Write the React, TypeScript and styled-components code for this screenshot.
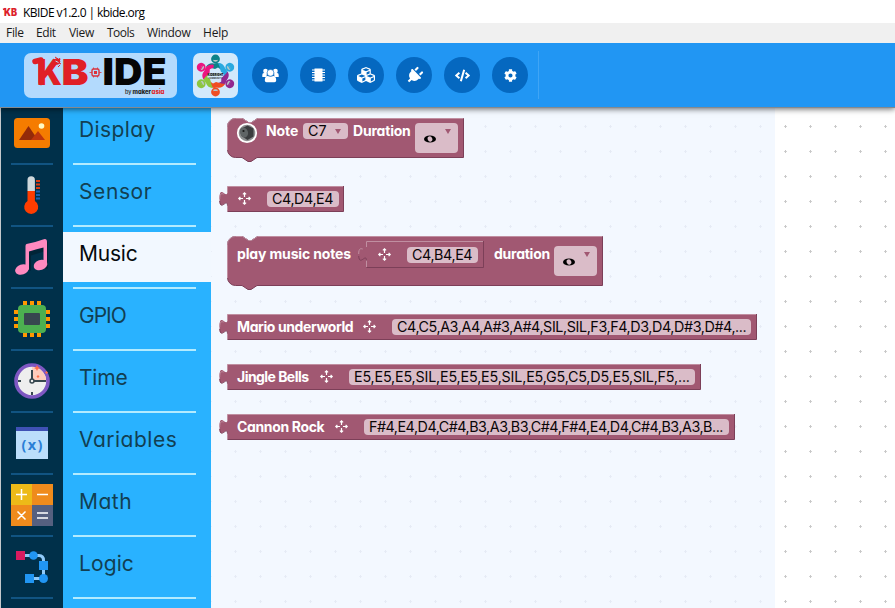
import React from "react";
import styled, { createGlobalStyle } from "styled-components";
import { FaCode, FaCog, FaCubes, FaPlug } from "react-icons/fa";

const GlobalStyle = createGlobalStyle`
  * { box-sizing: border-box; }
  body { margin: 0; background: #fff; font-family: Inter, "Noto Sans", sans-serif; font-feature-settings: "cv11"; overflow: hidden; }
  svg { display: block; overflow: visible; flex: none; }
`;

const Window = styled.div`
  width: 895px;
  height: 608px;
  display: flex;
  flex-direction: column;
  overflow: hidden;
`;

const TitleBar = styled.div`
  height: 23px;
  flex: none;
  display: flex;
  align-items: center;
  gap: 5px;
  padding-left: 3px;
  background: #fff;
  color: #000;
  font: 12px/23px "Open Sans", sans-serif;
`;

const TitleText = styled.span`
  padding-top: 1px;
  letter-spacing: -0.57px;
  white-space: nowrap;
`;

const MenuBar = styled.div`
  position: relative;
  z-index: 2;
  height: 20px;
  flex: none;
  display: flex;
  background: #f0f0f0;
  padding-left: 6px;
  font: 12px/20px "Open Sans", sans-serif;
  color: #1a1a1a;
`;

const MenuItem = styled.span<{ $w: number; $ls: number }>`
  width: ${(p) => p.$w}px;
  letter-spacing: ${(p) => p.$ls}px;
`;

const Header = styled.header`
  height: 65px;
  flex: none;
  display: flex;
  align-items: flex-start;
  padding: 10px 0 0 24px;
  background: #2196f3;
  border-bottom: 1px solid #84898e;
  box-shadow: 0 1px 6px rgba(0, 0, 0, 0.6);
  z-index: 1;
`;

const LogoBox = styled.div<{ $w: number; $bg: string }>`
  width: ${(p) => p.$w}px;
  height: 45px;
  margin-right: 16px;
  border-radius: 7px;
  background: ${(p) => p.$bg};
`;

const Tools = styled.nav`
  display: flex;
  gap: 12px;
  height: 48px;
  margin: -2px 0 0 -2px;
  padding: 6px 10px 0 0;
  border-right: 1px solid #3fa5f6;
`;

const ToolButton = styled.button`
  width: 36px;
  height: 36px;
  border: 0;
  padding: 0;
  border-radius: 50%;
  background: #0568c0;
  color: #fff;
  display: flex;
  align-items: center;
  justify-content: center;
`;

const Main = styled.main`
  flex: 1;
  display: flex;
  min-height: 0;
  border-left: 1px solid #c4c8cc;
`;

const IconColumn = styled.div`
  width: 62px;
  flex: none;
  background: #00304a;
`;

const LabelColumn = styled.div`
  width: 148px;
  flex: none;
  background: #29b2ff;
`;

const IconCell = styled.div`
  height: 50px;
  display: flex;
  align-items: center;
  justify-content: center;
`;

const LabelCell = styled.div<{ $active: boolean; $ls: number }>`
  height: 50px;
  padding-left: 16px;
  font-size: 21px;
  line-height: 44px;
  letter-spacing: ${(p) => p.$ls}px;
  color: ${(p) => (p.$active ? "#050a0d" : "#123f52")};
  background: ${(p) => (p.$active ? "#f2f8ff" : "transparent")};
`;

const Divider = styled.div<{ $dark?: boolean }>`
  height: 2px;
  margin: ${(p) => (p.$dark ? "5px 10px" : "5px 15px 5px 10px")};
  background: ${(p) => (p.$dark ? "#115482" : "#b3ebff")};
`;

const dots = (c: string, soft: string, x: number) => `
  background:
    conic-gradient(from 0deg at 1px 3px, transparent 270deg, ${c} 0) ${x}px 17px / 25px 25px,
    conic-gradient(from 0deg at 3px 1px, transparent 270deg, ${soft} 0) ${x - 1}px 18px / 25px 25px;
`;

const Flyout = styled.section`
  width: 564px;
  flex: none;
  padding: 10px 0 0 16px;
  ${dots("#e6ebf5", "#e9eef8", 24)}
  background-color: #f3f8ff;
`;

const Workspace = styled.section`
  flex: 1;
  ${dots("#c8c8c8", "#d2d2d2", 10)}
  background-color: #fff;
`;

const BlockBox = styled.div<{ $w: number; $h: number; $mt: number }>`
  position: relative;
  display: flex;
  align-items: flex-start;
  width: ${(p) => p.$w}px;
  height: ${(p) => p.$h}px;
  margin-top: ${(p) => p.$mt}px;
`;

const Shape = styled.svg`
  position: absolute;
  left: 0;
  top: 0;
`;

const Label = styled.span<{ $ml: number; $w: number; $mt?: number; $ls: number }>`
  position: relative;
  flex: none;
  margin: ${(p) => p.$mt ?? 4}px 0 0 ${(p) => p.$ml}px;
  width: ${(p) => p.$w}px;
  line-height: 17px;
  font-size: 14px;
  font-weight: 700;
  letter-spacing: ${(p) => p.$ls}px;
  color: #fff;
  white-space: nowrap;
`;

const Field = styled.span<{ $ml: number; $w: number; $ls?: number; $mt?: number; $h?: number }>`
  position: relative;
  flex: none;
  display: flex;
  align-items: center;
  margin: ${(p) => p.$mt ?? 5}px 0 0 ${(p) => p.$ml}px;
  padding-left: 5px;
  width: ${(p) => p.$w}px;
  height: ${(p) => p.$h ?? 16}px;
  border-radius: 4px;
  background: #dabcc8;
  color: #0a0507;
  font-size: 14.3px;
  line-height: 16px;
  letter-spacing: ${(p) => p.$ls ?? 0}px;
  white-space: nowrap;
`;

const IconSlot = styled.span<{ $ml: number; $mt: number }>`
  position: relative;
  flex: none;
  margin: ${(p) => p.$mt}px 0 0 ${(p) => p.$ml}px;
`;

const FILL = "#a15872";
const LIGHT = "#c08fa1";
const DARK = "#7c3f58";

function StatementShape({ w, h }: { w: number; h: number }) {
  return (
    <Shape width={w} height={h + 5}>
      <path d={`M.5 8.5A8 8 0 0 1 8.5.5H15.5l6 4h3l6-4H${w - 0.5}V${h - 0.5}H30l-6 4h-3l-6-4H8.5a8 8 0 0 1-8-8z`} fill={FILL} stroke={DARK} />
      <path d={`M.5 ${h - 8}V8.5A8 8 0 0 1 8.5.5H15.5l6 4h3l6-4H${w - 1}`} fill="none" stroke={LIGHT} />
    </Shape>
  );
}

function ValueShape({ w, h }: { w: number; h: number }) {
  return (
    <Shape width={w} height={h}>
      <path d={`M.5.5H${w - 0.5}V${h - 0.5}H.5V20c0-10-8 8-8-7.5s8 2.5 8-7.5z`} fill={FILL} />
      <path d={`M${w - 0.5} 0V${h - 0.5}H.5M.5 20c0-9-7 6-7.800-5`} fill="none" stroke={DARK} />
      <path d={`M-7.300 13c0-6 2-5.500 4-5M.5 6V.5H${w - 1}M.5 19.500V${h - 1}`} fill="none" stroke={LIGHT} />
    </Shape>
  );
}

const Move = () => (
  <svg width="13" height="13" viewBox="0 0 13 13" fill="none" stroke="#fff" strokeWidth="1.2">
    <path d="M6.5 1v4M6.5 8v4M1 6.500h4M8 6.500h4" />
    <path d="M4.900 2.400 6.500.8l1.600 1.600M4.900 10.600l1.600 1.600 1.600-1.600M2.400 4.900.8 6.500l1.600 1.600M10.600 4.900l1.600 1.600-1.600 1.600" />
  </svg>
);

const Arrow = () => (
  <svg width="6" height="5" viewBox="0 0 6 5"><path d="M0 0h6L3 5z" fill="#a15872" /></svg>
);

const WholeNote = () => (
  <svg width="12" height="8" viewBox="0 0 12 8">
    <ellipse cx="6" cy="4" rx="6" ry="3.600" fill="#000" />
    <ellipse cx="6" cy="4" rx="2.300" ry="2.700" fill="#dabcc8" transform="rotate(-25 6 4)" />
  </svg>
);

const Buzzer = () => (
  <svg width="20" height="20" viewBox="0 0 20 20">
    <circle cx="10" cy="10" r="9.200" fill="#8d8f90" stroke="#fff" strokeWidth="1.800" />
    <path d="M3.500 6l7-3.500 6 3v8l-6 3.500-6-4z" fill="#3a3c3e" />
    <ellipse cx="7" cy="9.500" rx="4" ry="5" fill="#5f6465" transform="rotate(-20 7 9.500)" />
    <circle cx="6.500" cy="8" r="1.100" fill="#171717" />
  </svg>
);

const Dropdown = styled(Field)`
  align-items: flex-start;
  padding: 6px 7px 0 9px;
  justify-content: space-between;
`;
const NoteGlyph = styled.span`
  margin-top: 6px;
`;

function NoteDropdown({ ml, mt }: { ml: number; mt: number }) {
  return (
    <Dropdown $ml={ml} $w={43} $h={30} $mt={mt}>
      <NoteGlyph><WholeNote /></NoteGlyph>
      <Arrow />
    </Dropdown>
  );
}

interface Melody { name: string; nw: number; nls: number; notes: string; fw: number; fls: number; w: number; mt: number }
const melodies: Melody[] = [
  { name: "Mario underworld", nw: 116, nls: -0.4, notes: "C4,C5,A3,A4,A#3,A#4,SIL,SIL,F3,F4,D3,D4,D#3,D#4,...", fw: 359, fls: -0.4, w: 530, mt: 28 },
  { name: "Jingle Bells", nw: 73, nls: -0.55, notes: "E5,E5,E5,SIL,E5,E5,E5,SIL,E5,G5,C5,D5,E5,SIL,F5,...", fw: 346, fls: -0.17, w: 474, mt: 24 },
  { name: "Cannon Rock", nw: 88, nls: -0.35, notes: "F#4,E4,D4,C#4,B3,A3,B3,C#4,F#4,E4,D4,C#4,B3,A3,B...", fw: 365, fls: -0.47, w: 508, mt: 24 },
];

const DisplayIcon = () => (
  <svg width="36" height="30" viewBox="0 0 36 30">
    <rect width="36" height="30" rx="3.500" fill="#f57c00" />
    <circle cx="27.500" cy="8" r="2.800" fill="#fff9c4" />
    <path d="M5 22 14.500 8 24 22z" fill="#942a09" />
    <path d="m17 22 7-9 7 9z" fill="#bf360c" />
  </svg>
);
const SensorIcon = () => (
  <svg width="36" height="40" viewBox="0 0 36 40">
    <path d="M13.500 16V5a3.700 3.700 0 0 1 7.400 0v11z" fill="#cfd8dc" />
    <path d="M13.500 16h7.400v10a7 7 0 1 1-7.400 0z" fill="#ff3d00" />
    <path d="M22 6h4M22 9.500h4M22 13h4" stroke="#dd3b12" strokeWidth="2" />
    <path d="M22 16.500h4M22 20h4M22 23.500h4" stroke="#1760b0" strokeWidth="2" />
  </svg>
);
const MusicIcon = () => (
  <svg width="34" height="37" viewBox="0 0 34 37">
    <g fill="#001c2c" opacity=".6" transform="translate(1 1.500)"><path d="M11 8 32 1v27h-4V11l-13 4v15h-4z" /></g>
    <g transform="translate(0 -1)" fill="#ff8ac0">
      <path d="M11.500 6Q20 4.500 28 1.500Q32 0 32 4v23h-3.500V9.500Q22 11 14 13.500v18h-3.500V8q0-1.500 1-2z" />
      <ellipse cx="7" cy="31.500" rx="7" ry="5" transform="rotate(-18 7 31.500)" />
      <ellipse cx="25.500" cy="27" rx="7" ry="5" transform="rotate(-18 25.500 27)" />
    </g>
  </svg>
);
const GpioIcon = () => (
  <svg width="36" height="36" viewBox="0 0 36 36">
    <path d="M11 0v36M18 0v36M25 0v36M0 11h36M0 18h36M0 25h36" stroke="#ff9800" strokeWidth="4" />
    <rect x="4" y="4" width="28" height="28" rx="4" fill="#4caf50" />
    <rect x="10" y="12" width="16" height="12" rx="1" fill="#37474f" />
  </svg>
);
const TimeIcon = () => (
  <svg width="36" height="36" viewBox="0 0 36 36">
    <circle cx="18" cy="18" r="16" fill="#eee" stroke="#7e57c2" strokeWidth="3.600" />
    <path d="M18 18V4A14 14 0 0 1 32 18z" fill="#ffccbc" />
    <path d="M18 7v11h11M4 18h3M18 29v3M29 18h3" stroke="#37474f" strokeWidth="2" fill="none" />
    <circle cx="18" cy="18" r="2" fill="#eee" stroke="#37474f" strokeWidth="1.500" />
    <path d="m23 2 1 2 2 1-2 1-1 2-1-2-2-1 2-1zM24 12l1.500 1.500L24 15l-1.500-1.500zM32.500 8l1.500 1.500-1.500 1.500L31 9.500z" fill="#ff6e4a" />
  </svg>
);
const VariablesIcon = () => (
  <svg width="32" height="32" viewBox="0 0 32 32">
    <rect width="32" height="32" fill="#bbdefb" />
    <rect width="32" height="4" fill="#3f51b5" />
    <text x="16" y="22.500" textAnchor="middle" fontFamily="Open Sans, sans-serif" fontWeight="700" fontSize="14.500" fill="#2a7fd6" textLength="21">(x)</text>
  </svg>
);
const MathIcon = () => (
  <svg width="42" height="42" viewBox="0 0 42 42">
    <path d="M0 0h21v21H0z" fill="#edba18" />
    <path d="M21 0h21v21H21zM0 21h21v21H0z" fill="#ef8b1c" />
    <path d="M21 21h21v21H21z" fill="#556080" />
    <path d="M10.500 5v11M5 10.500h11M26 10.500h11M6.500 27.500l8 8M14.500 27.500l-8 8M26 29h11M26 34h11" stroke="#fff" strokeWidth="1.500" />
  </svg>
);
const LogicIcon = () => (
  <svg width="32" height="32" viewBox="0 0 32 32">
    <path d="M5 4.500h18q4.500 0 4.500 5v18H13" stroke="#90caf9" strokeWidth="3" fill="none" />
    <rect width="9" height="9" fill="#d81b60" />
    <circle cx="17.500" cy="4.500" r="4.300" fill="#2196f3" />
    <rect x="23" y="10" width="9" height="9" fill="#2196f3" />
    <circle cx="27.500" cy="27.500" r="4.500" fill="#2196f3" />
    <rect x="9" y="23" width="9" height="9" fill="#2196f3" />
  </svg>
);

const categories = [
  { name: "Display", Icon: DisplayIcon, ls: 0.4 },
  { name: "Sensor", Icon: SensorIcon, ls: 0.6 },
  { name: "Music", Icon: MusicIcon, ls: -0.2 },
  { name: "GPIO", Icon: GpioIcon, ls: -1 },
  { name: "Time", Icon: TimeIcon, ls: -0.2 },
  { name: "Variables", Icon: VariablesIcon, ls: 0.5 },
  { name: "Math", Icon: MathIcon, ls: 0.5 },
  { name: "Logic", Icon: LogicIcon, ls: 0.1 },
];

const menu = [
  { name: "File", w: 30, ls: -0.3 },
  { name: "Edit", w: 33, ls: -0.4 },
  { name: "View", w: 38, ls: -0.3 },
  { name: "Tools", w: 40, ls: -0.5 },
  { name: "Window", w: 56, ls: -0.3 },
  { name: "Help", w: 40, ls: -0.2 },
];

const AppIcon = () => (
  <svg width="15" height="10" viewBox="0 0 15 10">
    <path d="M0 2.500 2.500 1.500" stroke="#dd1f2b" strokeWidth="1.800" />
    <text x="1" y="8.500" fontFamily="Inter, sans-serif" fontWeight="900" fontSize="10" fill="#dd1f2b" textLength="13" lengthAdjust="spacingAndGlyphs">KB</text>
  </svg>
);

const KbLogo = () => (
  <svg width="153" height="45" viewBox="0 0 153 45" fontFamily="Inter, sans-serif" fontWeight="900">
    <path d="M11 8.500 17 7v22.500" stroke="#e01f26" strokeWidth="5.500" fill="none" strokeLinecap="round" strokeLinejoin="round" />
    <text x="13" y="32" fontSize="36" fill="#e01f26" textLength="25" lengthAdjust="spacingAndGlyphs">K</text>
    <text x="37.500" y="32" fontSize="36" fill="#e01f26" textLength="27" lengthAdjust="spacingAndGlyphs">B</text>
    <g fill="#e01f26" stroke="#e01f26">
      <circle cx="33" cy="8.500" r="2.800" />
      <path d="m29 6 8 5M31 12l5-7M31 4l3 2M36 12l-2 2" fill="none" strokeWidth="1" />
    </g>
    <path d="m31.500 8 3 1.500" stroke="#b8dbfc" strokeWidth="1" />
    <g stroke="#e01f26" fill="none" opacity=".9">
      <rect x="68" y="16" width="7" height="7" rx="1.500" strokeWidth="1.400" />
      <rect x="70.500" y="18.500" width="2" height="2" fill="#e01f26" />
      <path d="M65.500 19.500h2.500M75 19.500h2.500M69.500 14.500v1.500M73.500 14.500v1.500M69.500 23v1.500M73.500 23v1.500" strokeWidth=".8" />
    </g>
    <text x="78.500" y="32" fontSize="37" fill="#050505" textLength="64" lengthAdjust="spacingAndGlyphs">IDE</text>
    <text x="101" y="41" fontSize="5.500" fontWeight="500" fill="#222">by</text>
    <text x="108.500" y="41" fontSize="6" fontWeight="800" fill="#222" textLength="18.500" lengthAdjust="spacingAndGlyphs">maker</text>
    <text x="127.500" y="41" fontSize="6" fontWeight="800" fill="#e01f26" textLength="13" lengthAdjust="spacingAndGlyphs">asia</text>
  </svg>
);

const people = [
  { c: "#0c8289", a: 0 }, { c: "#2aa9e0", a: 60 }, { c: "#92278f", a: 120 },
  { c: "#f04e23", a: 180 }, { c: "#8cc63f", a: 240 }, { c: "#ec1581", a: 300 },
];
const CommunityLogo = () => (
  <svg width="45" height="45" viewBox="0 0 45 45">
    {people.map((p) => (
      <g key={p.a} transform={`rotate(${p.a} 22.5 22.5)`}>
        <path d="M13 14Q15.500 9.500 21 10.500Q28 8.500 31 15.500L28.500 17 25 14.500 22 16 16.500 14.500z" fill={p.c} />
        <circle cx="22.500" cy="6" r="4.400" fill={p.c} />
        <ellipse cx="22.500" cy="7.300" rx="2.300" ry="1.400" fill="#b9c9c8" />
        <path d="M20.300 6.500h4.400" stroke={p.c} />
      </g>
    ))}
    <text x="14.500" y="22.500" fontSize="4" fontWeight="900" fontFamily="Inter, sans-serif" fill="#111" textLength="16" lengthAdjust="spacingAndGlyphs">KIDBRIGHT</text>
    <text x="15.500" y="25.500" fontSize="2.600" fontWeight="700" fontFamily="Inter, sans-serif" fill="#333" textLength="14" lengthAdjust="spacingAndGlyphs">COMMUNITY</text>
  </svg>
);

const UsersIcon = () => (
  <svg width="17" height="15" viewBox="0 0 17 15" fill="#fff">
    <circle cx="3.500" cy="3" r="2.300" /><circle cx="13.500" cy="3" r="2.300" />
    <path d="M.3 9V7q0-2 1.600-2h3L4.500 9zM16.700 9V7q0-2-1.600-2h-3l.4 4z" />
    <circle cx="8.500" cy="4.800" r="3.400" stroke="#0568c0" strokeWidth=".6" />
    <path d="M2.800 12.500q0-4.500 3-4.500 2.700 1.500 5.400 0 3 0 3 4.500 0 1.800-1.800 1.800H4.600q-1.800 0-1.800-1.800z" />
  </svg>
);
const ChipIcon = () => (
  <svg width="13" height="14" viewBox="0 0 13 14">
    <rect x="2.500" y=".5" width="8" height="13" fill="#fff" />
    <path d="M0 2h13M0 4.500h13M0 7h13M0 9.500h13M0 12h13" stroke="#fff" strokeWidth="1.200" />
  </svg>
);
const PlugIcon = styled(FaPlug)`
  transform: rotate(45deg);
`;

export default function App() {
  return (
    <>
      <GlobalStyle />
      <Window>
        <TitleBar><AppIcon /><TitleText>KBIDE v1.2.0 | kbide.org</TitleText></TitleBar>
        <MenuBar>{menu.map((m) => <MenuItem key={m.name} $w={m.w} $ls={m.ls}>{m.name}</MenuItem>)}</MenuBar>
        <Header>
          <LogoBox $w={153} $bg="#b3dafd"><KbLogo /></LogoBox>
          <LogoBox $w={45} $bg="#d3e9fb"><CommunityLogo /></LogoBox>
          <Tools>
            <ToolButton><UsersIcon /></ToolButton>
            <ToolButton><ChipIcon /></ToolButton>
            <ToolButton><FaCubes size={18} /></ToolButton>
            <ToolButton><PlugIcon size={17} /></ToolButton>
            <ToolButton><FaCode size={15} /></ToolButton>
            <ToolButton><FaCog size={13} /></ToolButton>
          </Tools>
        </Header>
        <Main>
          <IconColumn>
            {categories.map(({ name, Icon }) => (
              <React.Fragment key={name}><IconCell><Icon /></IconCell><Divider $dark /></React.Fragment>
            ))}
          </IconColumn>
          <LabelColumn>
            {categories.map(({ name, ls }) => (
              <React.Fragment key={name}>
                <LabelCell $active={name === "Music"} $ls={ls}>{name}</LabelCell><Divider />
              </React.Fragment>
            ))}
          </LabelColumn>
          <Flyout>
            <BlockBox $w={237} $h={40} $mt={0}>
              <StatementShape w={237} h={40} />
              <IconSlot $ml={10} $mt={5}><Buzzer /></IconSlot>
              <Label $ml={9} $w={37} $ls={-0.1}>Note</Label>
              <Field $ml={0} $w={45} $ls={0}>C7<IconSlot $ml={8} $mt={0}><Arrow /></IconSlot></Field>
              <Label $ml={5} $w={62} $ls={-0.2}>Duration</Label>
              <NoteDropdown ml={0} mt={5} />
            </BlockBox>
            <BlockBox $w={117} $h={26} $mt={28}>
              <ValueShape w={117} h={26} />
              <IconSlot $ml={11} $mt={6}><Move /></IconSlot>
              <Field $ml={16} $w={72} $ls={-0.4}>C4,D4,E4</Field>
            </BlockBox>
            <BlockBox $w={376} $h={50} $mt={24}>
              <StatementShape w={376} h={50} />
              <Label $ml={10} $mt={9} $w={129} $ls={-0.15}>play music notes</Label>
              <BlockBox $w={118} $h={27} $mt={5}>
                <ValueShape w={118} h={27} />
                <IconSlot $ml={12} $mt={7}><Move /></IconSlot>
                <Field $ml={16} $w={71} $ls={-0.4} $mt={6}>C4,B4,E4</Field>
              </BlockBox>
              <Label $ml={10} $mt={9} $w={60} $ls={-0.25}>duration</Label>
              <NoteDropdown ml={0} mt={10} />
            </BlockBox>
            {melodies.map((m) => (
              <BlockBox key={m.name} $w={m.w} $h={26} $mt={m.mt}>
                <ValueShape w={m.w} h={26} />
                <Label $ml={10} $w={m.nw} $ls={m.nls}>{m.name}</Label>
                <IconSlot $ml={10} $mt={6}><Move /></IconSlot>
                <Field $ml={16} $w={m.fw} $ls={m.fls}>{m.notes}</Field>
              </BlockBox>
            ))}
          </Flyout>
          <Workspace />
        </Main>
      </Window>
    </>
  );
}
